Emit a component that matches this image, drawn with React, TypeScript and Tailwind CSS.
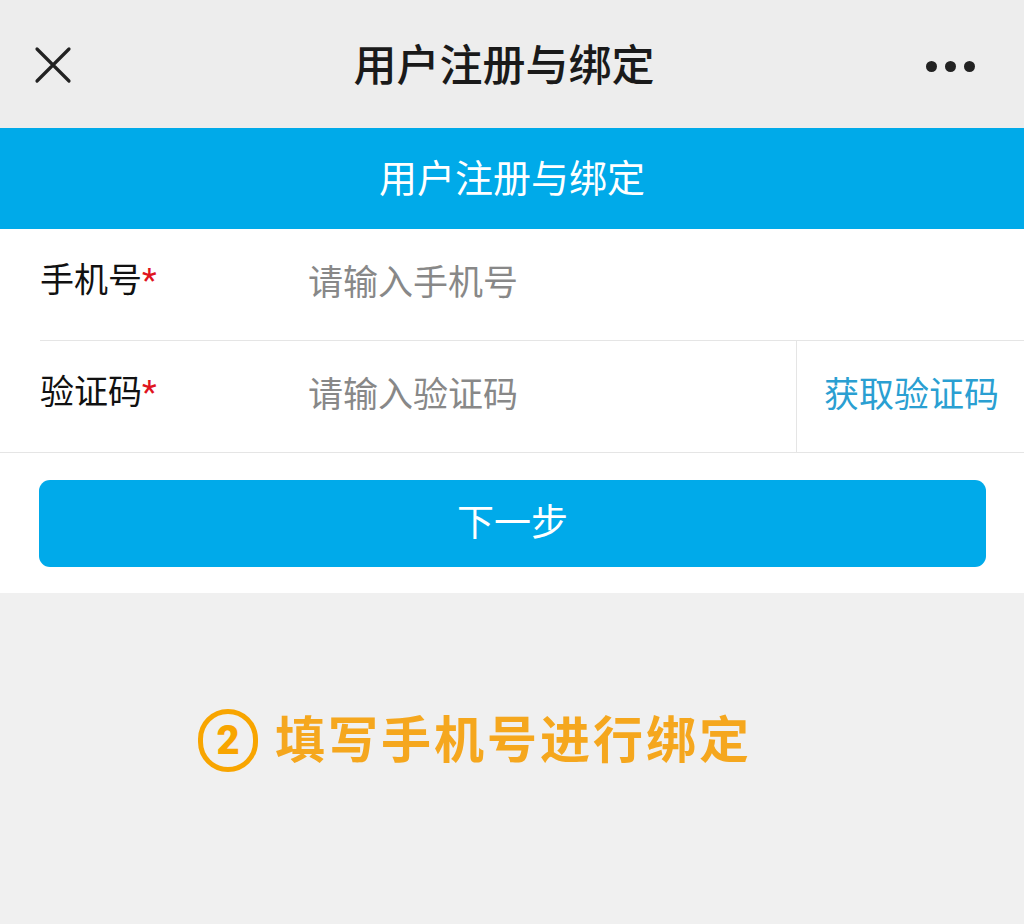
const font = "font-['Roboto','Noto_Sans_CJK_SC',sans-serif]";

export default function App() {
  return (
    <div className={`w-[1024px] h-[924px] bg-[#f0f0f0] flex flex-col ${font}`}>
      {/* 顶部导航 */}
      <div className="h-[128px] bg-[#ededed] flex items-center justify-between px-[34px]">
        <svg width="38" height="38" viewBox="0 0 38 38" className="mt-[2px]">
          <path d="M3 3 L35 35 M35 3 L3 35" stroke="#222" strokeWidth="3.2" strokeLinecap="round" />
        </svg>
        <h1 className="text-[43px] text-[#1a1a1a] font-medium leading-none mt-[4px] ml-[10px]">用户注册与绑定</h1>
        <div className="flex gap-[8px] mr-[15px] mt-[4px]">
          <span className="w-[11px] h-[11px] rounded-full bg-[#222]" />
          <span className="w-[11px] h-[11px] rounded-full bg-[#222]" />
          <span className="w-[11px] h-[11px] rounded-full bg-[#222]" />
        </div>
      </div>

      {/* 蓝色标题 */}
      <div className="h-[101px] bg-[#00aae9] flex items-center justify-center">
        <span className="text-[38px] text-white leading-none">用户注册与绑定</span>
      </div>

      {/* 表单 */}
      <div className="bg-white">
        <div className="pl-[40px]">
          <div className="h-[112px] flex items-center border-b border-[#e5e5e5]">
            <div className="w-[268px] text-[34px] text-[#111] mt-[-8px]">
              手机号<span className="text-[#e0141e]">*</span>
            </div>
            <div className="text-[35px] text-[#888]">请输入手机号</div>
          </div>
        </div>
        <div className="h-[112px] flex border-b border-[#e5e5e5]">
          <div className="flex-1 flex items-center pl-[40px] border-r border-[#e5e5e5]">
            <div className="w-[268px] text-[34px] text-[#111] mt-[-8px]">
              验证码<span className="text-[#e0141e]">*</span>
            </div>
            <div className="text-[35px] text-[#888]">请输入验证码</div>
          </div>
          <div className="w-[227px] flex items-center pl-[27px] text-[35px] text-[#2a9fd2]">获取验证码</div>
        </div>
        <div className="px-[39px] pt-[27px] pb-[26px]">
          <button className="w-[947px] h-[87px] rounded-[11px] bg-[#00aaea] text-white text-[37px] flex items-center justify-center">
            下一步
          </button>
        </div>
      </div>

      {/* 提示 */}
      <div className="flex-1 flex items-start pl-[198px] pt-[116px]">
        <div className="flex items-center gap-[17px] text-[#f5a71e] font-bold">
          <span className="w-[60px] h-[63px] rounded-full border-[5px] border-[#f8a500] text-[#f8a500] flex items-center justify-center text-[40px] font-black leading-none">2</span>
          <span className="text-[50px] tracking-[3px] leading-none">填写手机号进行绑定</span>
        </div>
      </div>
    </div>
  );
}
